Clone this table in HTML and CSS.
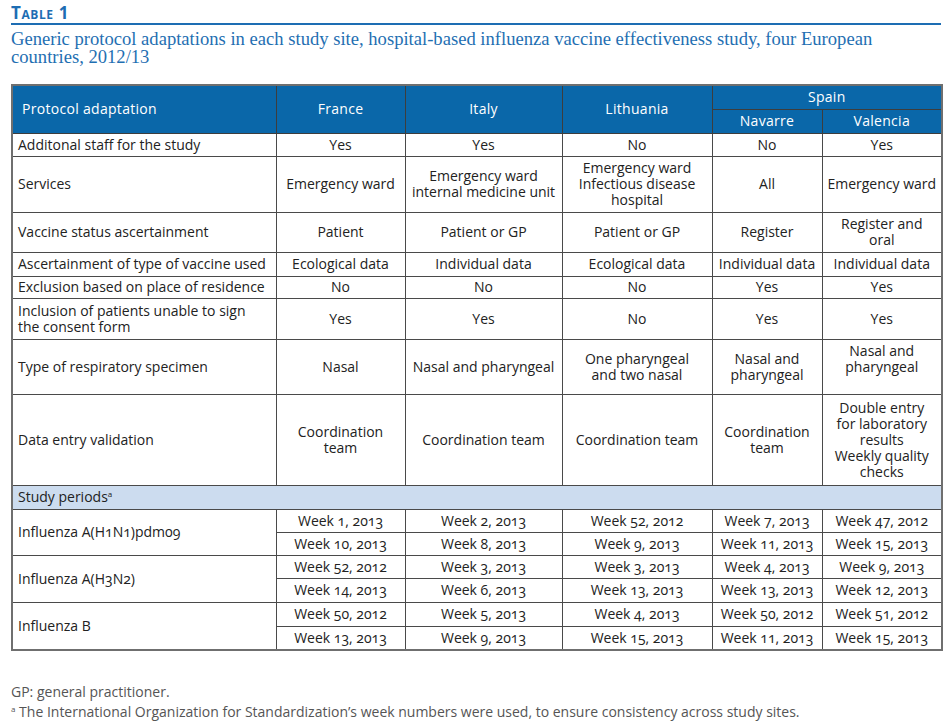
FILE: index.html
```html
<!DOCTYPE html>
<html lang="en">
<head>
<meta charset="utf-8">
<title>Table 1</title>
<link rel="stylesheet" href="styles.css">
</head>
<body>
<div class="page">
  <h2 class="label">Table 1</h2>
  <p class="caption">Generic protocol adaptations in each study site, hospital-based influenza vaccine effectiveness study, four European countries, 2012/13</p>
  <table class="data">
    <colgroup>
      <col class="c0"><col class="c1"><col class="c2"><col class="c3"><col class="c4"><col class="c5">
    </colgroup>
    <thead>
      <tr class="h1">
        <th rowspan="2" class="left">Protocol adaptation</th>
        <th rowspan="2">France</th>
        <th rowspan="2">Italy</th>
        <th rowspan="2">Lithuania</th>
        <th colspan="2">Spain</th>
      </tr>
      <tr class="h2">
        <th>Navarre</th>
        <th>Valencia</th>
      </tr>
    </thead>
    <tbody>
      <tr class="r23"><td class="left">Additonal staff for the study</td><td>Yes</td><td>Yes</td><td>No</td><td>No</td><td>Yes</td></tr>
      <tr class="r56"><td class="left">Services</td><td>Emergency ward</td><td>Emergency ward<br>internal medicine unit</td><td>Emergency ward<br>Infectious disease<br>hospital</td><td>All</td><td>Emergency ward</td></tr>
      <tr class="r40"><td class="left">Vaccine status ascertainment</td><td>Patient</td><td>Patient or GP</td><td>Patient or GP</td><td>Register</td><td>Register and<br>oral</td></tr>
      <tr class="r24"><td class="left">Ascertainment of type of vaccine used</td><td>Ecological data</td><td>Individual data</td><td>Ecological data</td><td>Individual data</td><td>Individual data</td></tr>
      <tr class="r22"><td class="left">Exclusion based on place of residence</td><td>No</td><td>No</td><td>No</td><td>Yes</td><td>Yes</td></tr>
      <tr class="r41"><td class="left">Inclusion of patients unable to sign<br>the consent form</td><td>Yes</td><td>Yes</td><td>No</td><td>Yes</td><td>Yes</td></tr>
      <tr class="r55"><td class="left">Type of respiratory specimen</td><td>Nasal</td><td>Nasal and pharyngeal</td><td>One pharyngeal<br>and two nasal</td><td>Nasal and<br>pharyngeal</td><td>Nasal and<br>pharyngeal<br>&nbsp;</td></tr>
      <tr class="r90"><td class="left">Data entry validation</td><td>Coordination<br>team</td><td>Coordination team</td><td>Coordination team</td><td>Coordination<br>team</td><td>Double entry<br>for laboratory<br>results<br>Weekly quality<br>checks</td></tr>
      <tr class="section"><td colspan="6" class="left">Study periods<sup>a</sup></td></tr>
      <tr class="r23"><td rowspan="2" class="left">Influenza A(H1N1)pdm09</td><td>Week 1, 2013</td><td>Week 2, 2013</td><td>Week 52, 2012</td><td>Week 7, 2013</td><td>Week 47, 2012</td></tr>
      <tr class="r23"><td>Week 10, 2013</td><td>Week 8, 2013</td><td>Week 9, 2013</td><td>Week 11, 2013</td><td>Week 15, 2013</td></tr>
      <tr class="r23"><td rowspan="2" class="left">Influenza A(H3N2)</td><td>Week 52, 2012</td><td>Week 3, 2013</td><td>Week 3, 2013</td><td>Week 4, 2013</td><td>Week 9, 2013</td></tr>
      <tr class="r24"><td>Week 14, 2013</td><td>Week 6, 2013</td><td>Week 13, 2013</td><td>Week 13, 2013</td><td>Week 12, 2013</td></tr>
      <tr class="r24"><td rowspan="2" class="left">Influenza B</td><td>Week 50, 2012</td><td>Week 5, 2013</td><td>Week 4, 2013</td><td>Week 50, 2012</td><td>Week 51, 2012</td></tr>
      <tr class="r24"><td>Week 13, 2013</td><td>Week 9, 2013</td><td>Week 15, 2013</td><td>Week 11, 2013</td><td>Week 15, 2013</td></tr>
    </tbody>
  </table>
  <div class="notes">
    <p>GP: general practitioner.</p>
    <p><sup>a</sup> The International Organization for Standardization’s week numbers were used, to ensure consistency across study sites.</p>
  </div>
</div>
</body>
</html>
```

FILE: styles.css
```css
html, body {
  margin: 0;
  padding: 0;
  background: #ffffff;
}

.page {
  padding: 4px 11px 0 11px;
  width: 930px;
}

.label {
  margin: 0;
  font-family: "Open Sans", "Liberation Sans", sans-serif;
  font-weight: 700;
  font-variant: small-caps;
  font-size: 17px;
  line-height: 18px;
  color: #1d6db3;
  letter-spacing: 0.6px;
  padding-bottom: 1px;
  border-bottom: 2px solid #1d6db3;
}

.caption {
  margin: 5px 0 0 0;
  font-family: "Liberation Serif", "DejaVu Serif", serif;
  font-size: 18.6px;
  line-height: 18px;
  color: #1f6fb2;
  width: 900px;
}

.data {
  margin-top: 18px;
  width: 930px;
  table-layout: fixed;
  border-collapse: collapse;
  border: 2px solid #6f6f6f;
  font-family: "Open Sans", "Liberation Sans", sans-serif;
  font-variant-numeric: oldstyle-nums;
  font-feature-settings: "onum" 1;
  font-size: 14px;
  line-height: 16px;
  color: #222;
}

.c0 { width: 264px; }
.c1 { width: 129px; }
.c2 { width: 157px; }
.c3 { width: 150px; }
.c4 { width: 110px; }
.c5 { width: 120px; }

.data th,
.data td {
  border: 1px solid #4a4a4a;
  padding: 0 3px;
  text-align: center;
  vertical-align: middle;
  overflow: hidden;
  white-space: nowrap;
}

.data th {
  background: #0a67a9;
  color: #ffffff;
  font-weight: 400;
  border-color: #3d3d3d;
  letter-spacing: 0.3px;
}

.data .left {
  text-align: left;
  padding-left: 5px;
}

.data th.left { padding-left: 9px; }

.h1 { height: 24px; }
.h2 { height: 24px; }

.r22 { height: 22px; }
.r23 { height: 23px; }
.r24 { height: 24px; }
.r40 { height: 40px; }
.r41 { height: 41px; }
.r55 { height: 55px; }
.r56 { height: 56px; }
.r90 { height: 91px; }

.section td {
  background: #ccdcef;
  height: 23px;
}

.data sup {
  font-size: 8px;
  line-height: 0;
  vertical-align: 5px;
}

.notes {
  margin-top: 31px;
  font-family: "Open Sans", "Liberation Sans", sans-serif;
  font-size: 14px;
  line-height: 20px;
  color: #555555;
}

.notes p {
  margin: 0;
}

.notes sup {
  font-size: 8px;
  line-height: 0;
  vertical-align: 5px;
}
```
